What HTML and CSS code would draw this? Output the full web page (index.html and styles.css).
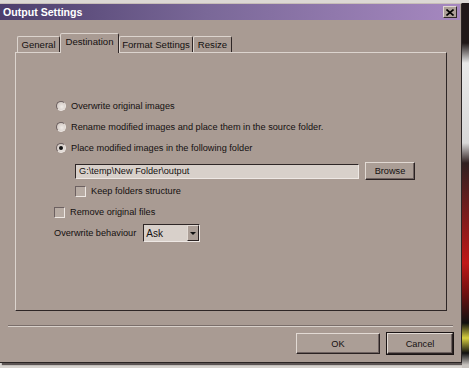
FILE: index.html
```html
<!DOCTYPE html>
<html lang="en">
<head>
    <meta charset="UTF-8">
    <title>Output Settings</title>
    <link rel="stylesheet" href="styles.css">
</head>
<body>
    <div class="top-strip"></div>
    <div class="screen">
        <div class="window">
            <div class="titlebar">
                <span class="title">Output Settings</span>
                <span class="close">
                    <svg width="8" height="7" viewBox="0 0 8 7"><path d="M0.5 0.5 L7.5 6.5 M7.5 0.5 L0.5 6.5" stroke="#000" stroke-width="1.6"/></svg>
                </span>
            </div>
            <div class="tabs">
                <div class="tab tab-general">General</div>
                <div class="tab tab-dest active">Destination</div>
                <div class="tab tab-format">Format Settings</div>
                <div class="tab tab-resize">Resize</div>
            </div>
            <div class="panel">
                <div class="row radio-row">
                    <span class="radio"></span>
                    <span>Overwrite original images</span>
                </div>
                <div class="row radio-row">
                    <span class="radio"></span>
                    <span>Rename modified images and place them in the source folder.</span>
                </div>
                <div class="row radio-row">
                    <span class="radio checked"></span>
                    <span>Place modified images in the following folder</span>
                </div>
                <div class="row folder-row">
                    <div class="textbox">G:\temp\New Folder\output</div>
                    <div class="button browse">Browse</div>
                </div>
                <div class="row keep-row">
                    <span class="checkbox"></span>
                    <span>Keep folders structure</span>
                </div>
                <div class="row remove-row">
                    <span class="checkbox"></span>
                    <span>Remove original files</span>
                </div>
                <div class="row behaviour-row">
                    <span class="label">Overwrite behaviour</span>
                    <div class="select">
                        <span class="select-value">Ask</span>
                        <span class="select-arrow"></span>
                    </div>
                </div>
            </div>
            <div class="separator"></div>
            <div class="actions">
                <div class="button ok">OK</div>
                <div class="button cancel">Cancel</div>
            </div>
        </div>
        <div class="desktop-edge"></div>
    </div>
</body>
</html>
```

FILE: styles.css
```css
* {
    margin: 0;
    padding: 0;
    box-sizing: border-box;
}

body {
    width: 469px;
    height: 368px;
    overflow: hidden;
    background: #d8d4d0;
    font-family: 'Liberation Sans', Arial, sans-serif;
    font-size: 9.2px;
    color: #141010;
}

.top-strip {
    height: 3px;
    background: #dcd8d4;
}

.screen {
    display: flex;
    align-items: flex-start;
}

.window {
    width: 462px;
    height: 360px;
    background: #a99b93;
    border-top: 1px solid #c8beb8;
    border-right: 1px solid #2a2424;
    border-bottom: 1px solid #2a2424;
    box-shadow: 2px 2px 1px rgba(40, 30, 30, 0.7);
    display: flex;
    flex-direction: column;
}

.titlebar {
    height: 16px;
    margin-right: 1px;
    padding: 0 3px 0 3px;
    background: linear-gradient(to right, #4c3e6c, #7a6898 45%, #a688c0);
    display: flex;
    align-items: center;
    justify-content: space-between;
}

.title {
    color: #fff;
    font-weight: bold;
    font-size: 10.6px;
}

.close {
    width: 14px;
    height: 12px;
    background: #ada098;
    border: 1px solid;
    border-color: #e0d8d2 #302828 #302828 #e0d8d2;
    display: flex;
    align-items: center;
    justify-content: center;
}

.tabs {
    display: flex;
    align-items: flex-end;
    height: 18px;
    margin: 14px 0 0 15px;
    position: relative;
    z-index: 1;
}

.tab {
    height: 16px;
    padding: 0 2px;
    white-space: nowrap;
    font-size: 9.6px;
    border: 1px solid;
    border-bottom: none;
    border-color: #dcd4ce #2e2626 transparent #dcd4ce;
    border-radius: 2px 2px 0 0;
    display: flex;
    align-items: center;
    justify-content: center;
}

.tab-general { width: 43px; margin-left: 2px; }
.tab-dest { width: 59px; }
.tab-format { width: 74px; }
.tab-resize { width: 39px; }

.tab.active {
    height: 20px;
    margin-bottom: -1px;
    background: #a99b93;
    align-items: flex-start;
    padding-top: 2px;
}

.panel {
    width: 432px;
    height: 259px;
    margin-left: 15px;
    border: 1px solid;
    border-color: #dcd4ce #2e2626 #2e2626 #dcd4ce;
    padding: 42px 0 0 40px;
    display: flex;
    flex-direction: column;
}

.row {
    display: flex;
    align-items: center;
    white-space: nowrap;
}

.radio-row {
    height: 21px;
    gap: 5px;
}

.radio {
    width: 10px;
    height: 10px;
    border-radius: 50%;
    background: radial-gradient(circle at 60% 60%, #f0ebe7, #c8beb8);
    border: 1px solid;
    border-color: #6c6060 #eee8e4 #eee8e4 #6c6060;
    display: flex;
    align-items: center;
    justify-content: center;
}

.radio.checked::after {
    content: "";
    width: 4px;
    height: 4px;
    border-radius: 50%;
    background: #111;
}

.folder-row {
    height: 18px;
    margin: 4px 0 0 19px;
    gap: 6px;
}

.textbox {
    width: 284px;
    height: 15px;
    padding: 0 3px;
    background: #d8d0ca;
    border: 1px solid;
    border-color: #2e2626 #eee8e4 #eee8e4 #2e2626;
    display: flex;
    align-items: center;
}

.button {
    background: #ab9e96;
    border: 1px solid;
    border-color: #e2dad4 #2a2222 #2a2222 #e2dad4;
    box-shadow: inset -1px -1px 0 #6e6260;
    display: flex;
    align-items: center;
    justify-content: center;
}

.browse {
    width: 50px;
    height: 18px;
}

.keep-row {
    height: 22px;
    margin-left: 19px;
    gap: 5px;
}

.checkbox {
    width: 11px;
    height: 11px;
    background: #b8aca4;
    border: 1px solid;
    border-color: #6c6060 #eee8e4 #eee8e4 #6c6060;
}

.remove-row {
    height: 20px;
    margin-left: -2px;
    gap: 5px;
}

.behaviour-row {
    height: 22px;
    margin-left: -2px;
    gap: 7px;
}

.select {
    width: 57px;
    height: 18px;
    background: #d8d0ca;
    border: 1px solid;
    border-color: #2e2626 #eee8e4 #eee8e4 #2e2626;
    display: flex;
    align-items: stretch;
}

.select-value {
    flex: 1;
    padding-left: 2px;
    display: flex;
    align-items: center;
    font-size: 10px;
}

.select-arrow {
    width: 12px;
    background: #ab9e96;
    border: 1px solid;
    border-color: #e2dad4 #2a2222 #2a2222 #e2dad4;
    display: flex;
    align-items: center;
    justify-content: center;
}

.select-arrow::after {
    content: "";
    border-left: 3px solid transparent;
    border-right: 3px solid transparent;
    border-top: 3px solid #111;
}

.separator {
    height: 2px;
    margin: 14px 8px 0 8px;
    border-top: 1px solid #7a6e6a;
    border-bottom: 1px solid #d8d0ca;
}

.actions {
    display: flex;
    justify-content: flex-end;
    gap: 7px;
    margin-top: 6px;
    padding-right: 8px;
}

.ok {
    width: 84px;
    height: 21px;
}

.cancel {
    width: 66px;
    height: 21px;
    outline: 1px solid #1a1414;
}

.desktop-edge {
    width: 7px;
    height: 365px;
    background: linear-gradient(to bottom, #201818 0, #201818 40px, #e8e8e8 60px, #d8d8d8 140px, #302020 160px, #c01818 260px, #701010 290px, #101010 320px, #d8d040 335px, #101010 350px, #c8c4c0 362px);
}
```
